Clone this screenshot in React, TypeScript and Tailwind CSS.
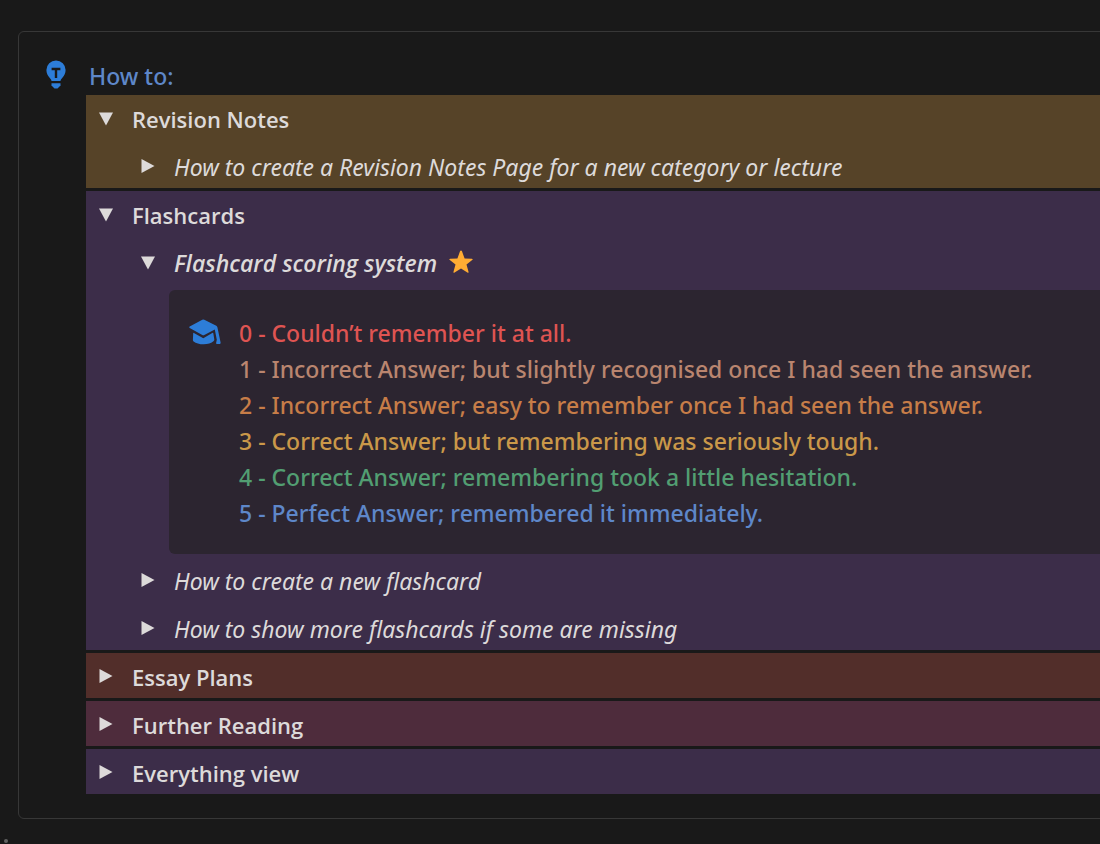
import type { ReactNode } from "react";

function BulbIcon() {
  return (
    <svg viewBox="0 0 20 30" className="h-[30px] w-5 text-[#2d7dd8]" fill="currentColor" aria-hidden="true">
      <path d="M10 .5A9.600 9.600 0 0 0 .4 10.100c0 3 1.400 5.500 3 7.500 1.200 1.500 1.900 2.200 2.100 3.300h9c.2-1.100.9-1.800 2.100-3.300 1.600-2 3-4.500 3-7.500A9.600 9.600 0 0 0 10 .5Z" />
      <path d="M5.500 23.300h9v2.200L11.500 28.600h-3l-3-3.100Z" />
      <path d="M5.600 9h8.800M10 9v9" fill="none" stroke="#191919" strokeWidth="2.400" />
    </svg>
  );
}

function CapIcon() {
  return (
    <svg viewBox="0 0 32 26" className="h-[26px] w-8 shrink-0 text-[#2d7dd8]" fill="currentColor" aria-hidden="true">
      <path d="M13.300.8Q14.300.2 15.300.8L27.300 6.800Q28.200 7.300 28.400 8.300L31.600 23.400Q31.800 25 30.600 25H28Q26.900 25 27.100 23.900L27.800 20.700 25.800 10.400 15.300 16Q14.300 16.600 13.300 16L.7 9Q-.1 8.200.7 7.500Z" />
      <path d="M4.200 14.200Q4.200 13.600 4.900 13.900L14.300 19.200 23.300 14Q24.100 13.500 24.300 14.300L25.300 20.400Q25.400 21.300 24.700 22C22.400 24.200 18.700 25.300 14.600 25.300 10.400 25.300 7 24.200 4.600 22.400Q3.800 21.700 3.900 20.900Z" />
    </svg>
  );
}

function StarIcon() {
  return (
    <svg viewBox="0 0 24 24" className="mb-0.5 size-6 shrink-0 text-[#ffac33]" fill="currentColor" role="img" aria-label="Star">
      <path d="M12.900 1.100 15.600 8.500l7.200.2c.9 0 1.100.9.400 1.400l-5.700 4.400 2 7.300c.3.900-.4 1.300-1.100.8L12 18.400l-6.400 4.200c-.7.500-1.400 0-1.100-.8l2-7.300L.8 10.100c-.7-.5-.5-1.400.4-1.400l7.200-.2 2.700-7.400c.3-.9 1.500-.9 1.800 0Z" />
    </svg>
  );
}

type ToggleProps = {
  title: string;
  titleClass: string;
  open?: boolean;
  icon?: ReactNode;
  className?: string;
  children?: ReactNode;
};

function Toggle({ title, titleClass, open = false, icon, className = "", children }: ToggleProps) {
  return (
    <details open={open} className={className}>
      <summary className="flex h-[45px] cursor-pointer list-none items-center whitespace-nowrap pl-3 pt-0.5">
        <svg
          viewBox="0 0 16 16"
          className={open ? "mr-[18px] size-4 shrink-0 rotate-90" : "mb-0.5 mr-[18px] size-4 shrink-0"}
          fill="currentColor"
          aria-hidden="true"
        >
          <path d="M1.500 1v14l13-7Z" />
        </svg>
        <span className={titleClass}>{title}</span>
        {icon}
      </summary>
      {children}
    </details>
  );
}

const heading = "text-[22px] font-semibold";
const entry = "font-['Noto_Sans','Segoe_UI',sans-serif] italic";

const scores = [
  { text: "0 - Couldn’t remember it at all.", color: "text-[#df5452]" },
  { text: "1 - Incorrect Answer; but slightly recognised once I had seen the answer.", color: "text-[#ba856f]" },
  { text: "2 - Incorrect Answer; easy to remember once I had seen the answer.", color: "text-[#c77d48]" },
  { text: "3 - Correct Answer; but remembering was seriously tough.", color: "text-[#ca9849]" },
  { text: "4 - Correct Answer; remembering took a little hesitation.", color: "text-[#529e72]" },
  { text: "5 - Perfect Answer; remembered it immediately.", color: "text-[#5e87c9]" },
];

export default function App() {
  return (
    <div className="min-h-screen overflow-hidden bg-[#191919] pl-[18px] pt-[31px] font-['Open_Sans','Segoe_UI',sans-serif] text-[23px] leading-9 text-[#dddada]">
      <main className="-mr-2 flex rounded-md border border-[#373737] pb-6 pl-[27px] pt-[27px]">
        <div className="w-10 shrink-0 pt-px">
          <BulbIcon />
        </div>
        <div className="min-w-0 grow">
          <h1 className="pl-[3px] font-['Noto_Sans','Segoe_UI',sans-serif] font-medium leading-[34px] text-[#5e87c9]">How to:</h1>
          <div className="mt-0.5 flex flex-col gap-[3px]">
            <Toggle open title="Revision Notes" titleClass={heading} className="bg-[#564328]">
              <div className="mt-[3px] pl-[42px]">
                <Toggle title="How to create a Revision Notes Page for a new category or lecture" titleClass={entry} />
              </div>
            </Toggle>
            <Toggle open title="Flashcards" titleClass={heading} className="bg-[#3c2d49]">
              <div className="mt-[3px] flex flex-col gap-[3px] pl-[42px]">
                <Toggle open title="Flashcard scoring system" titleClass="mr-3 font-semibold italic" icon={<StarIcon />}>
                  <section className="ml-[41px] mt-1.5 flex rounded-md bg-[#2c2530] pb-[23px] pl-5 pt-[25px]">
                    <div className="w-[50px] shrink-0 pt-1">
                      <CapIcon />
                    </div>
                    <ul className="whitespace-nowrap font-['Noto_Sans','Segoe_UI',sans-serif] font-medium">
                      {scores.map((score) => (
                        <li key={score.text} className={score.color}>
                          {score.text}
                        </li>
                      ))}
                    </ul>
                  </section>
                </Toggle>
                <Toggle title="How to create a new flashcard" titleClass={entry} />
                <Toggle title="How to show more flashcards if some are missing" titleClass={entry} />
              </div>
            </Toggle>
            <Toggle title="Essay Plans" titleClass={heading} className="bg-[#522e2a]" />
            <Toggle title="Further Reading" titleClass={heading} className="bg-[#4e2c3c]" />
            <Toggle title="Everything view" titleClass={heading} className="bg-[#3c2d49]" />
          </div>
        </div>
      </main>
      <div className="-ml-[14px] mt-5 size-1 rounded-full bg-[#626262]" />
    </div>
  );
}
